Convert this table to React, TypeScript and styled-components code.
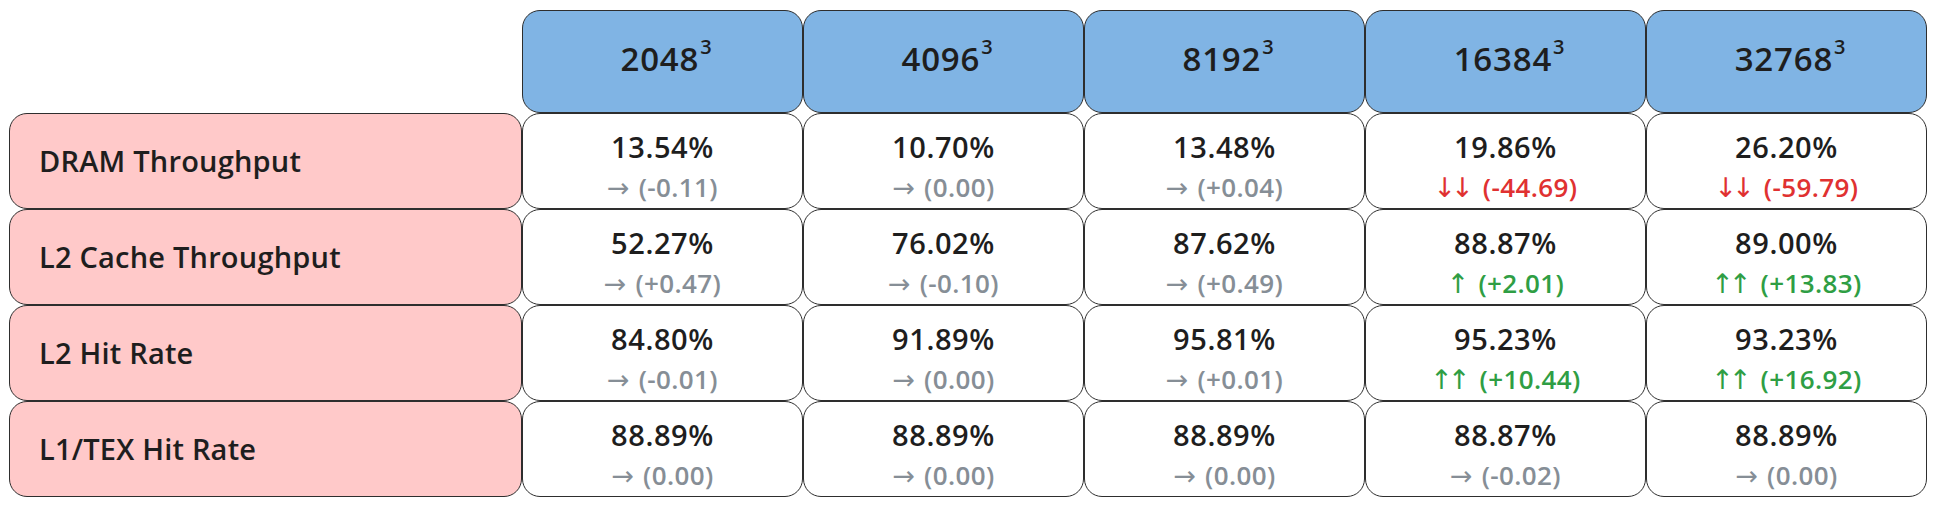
import styled, { createGlobalStyle } from "styled-components";

const GlobalStyle = createGlobalStyle`
  html, body {
    margin: 0;
    padding: 0;
    background: #ffffff;
  }
  * {
    box-sizing: border-box;
  }
`;

const Page = styled.div`
  padding: 10px 0 0 9px;
  font-family: "Open Sans", "DejaVu Sans", sans-serif;
  font-weight: 600;
  color: #1e1e1e;
`;

const Table = styled.div`
  display: grid;
  grid-template-columns: 513px repeat(5, 281px);
  grid-template-rows: 103px repeat(4, 96px);
`;

const Box = styled.div`
  border: 1.6px solid #2e2e2e;
  border-radius: 18px;
`;

const Corner = styled.div``;

const HeaderCell = styled(Box)`
  display: flex;
  align-items: center;
  justify-content: center;
  padding-bottom: 6px;
  padding-left: 8px;
  background: #80b4e4;
  font-size: 33px;
  letter-spacing: 0.8px;
`;

const Sup = styled.span`
  font-size: 20px;
  position: relative;
  top: -12px;
  margin-left: 1px;
`;

const LabelCell = styled(Box)`
  display: flex;
  align-items: center;
  padding-left: 29px;
  padding-bottom: 2px;
  background: #ffc9c9;
  font-size: 29px;
  letter-spacing: 0.2px;
`;

const ValueCell = styled(Box)`
  display: flex;
  flex-direction: column;
  align-items: center;
  justify-content: center;
  padding-top: 12px;
  background: #ffffff;
`;

const Value = styled.div`
  height: 40px;
  line-height: 40px;
  font-size: 29px;
  letter-spacing: 0.6px;
`;

type Tone = "flat" | "up" | "down";

const toneColor: Record<Tone, string> = {
  flat: "#868e96",
  up: "#2f9e44",
  down: "#e03131",
};

const Delta = styled.div<{ $tone: Tone }>`
  height: 40px;
  line-height: 40px;
  font-size: 26px;
  letter-spacing: 0.4px;
  color: ${(p) => toneColor[p.$tone]};
`;

const Arrow = styled.span`
  font-family: "DejaVu Sans", sans-serif;
  font-size: 27px;
  font-weight: 400;
  letter-spacing: -5px;
  margin-right: 14px;
`;

interface Cell {
  value: string;
  arrow: string;
  delta: string;
}

interface Metric {
  name: string;
  cells: Cell[];
}

const sizes = ["2048", "4096", "8192", "16384", "32768"];

const c = (value: string, arrow: string, delta: string): Cell => ({ value, arrow, delta });

const metrics: Metric[] = [
  {
    name: "DRAM Throughput",
    cells: [
      c("13.54%", "→", "(-0.11)"),
      c("10.70%", "→", "(0.00)"),
      c("13.48%", "→", "(+0.04)"),
      c("19.86%", "↓↓", "(-44.69)"),
      c("26.20%", "↓↓", "(-59.79)"),
    ],
  },
  {
    name: "L2 Cache Throughput",
    cells: [
      c("52.27%", "→", "(+0.47)"),
      c("76.02%", "→", "(-0.10)"),
      c("87.62%", "→", "(+0.49)"),
      c("88.87%", "↑", "(+2.01)"),
      c("89.00%", "↑↑", "(+13.83)"),
    ],
  },
  {
    name: "L2 Hit Rate",
    cells: [
      c("84.80%", "→", "(-0.01)"),
      c("91.89%", "→", "(0.00)"),
      c("95.81%", "→", "(+0.01)"),
      c("95.23%", "↑↑", "(+10.44)"),
      c("93.23%", "↑↑", "(+16.92)"),
    ],
  },
  {
    name: "L1/TEX Hit Rate",
    cells: [
      c("88.89%", "→", "(0.00)"),
      c("88.89%", "→", "(0.00)"),
      c("88.89%", "→", "(0.00)"),
      c("88.87%", "→", "(-0.02)"),
      c("88.89%", "→", "(0.00)"),
    ],
  },
];

const toneOf = (arrow: string): Tone => {
  if (arrow.startsWith("↑")) return "up";
  if (arrow.startsWith("↓")) return "down";
  return "flat";
};

export default function App() {
  return (
    <>
      <GlobalStyle />
      <Page>
        <Table>
          <Corner />
          {sizes.map((size) => (
            <HeaderCell key={size}>
              {size}
              <Sup>3</Sup>
            </HeaderCell>
          ))}
          {metrics.map((metric) => [
            <LabelCell key={metric.name}>{metric.name}</LabelCell>,
            ...metric.cells.map((cell, i) => (
              <ValueCell key={metric.name + i}>
                <Value>{cell.value}</Value>
                <Delta $tone={toneOf(cell.arrow)}>
                  <Arrow>{cell.arrow}</Arrow>
                  {cell.delta}
                </Delta>
              </ValueCell>
            )),
          ])}
        </Table>
      </Page>
    </>
  );
}
